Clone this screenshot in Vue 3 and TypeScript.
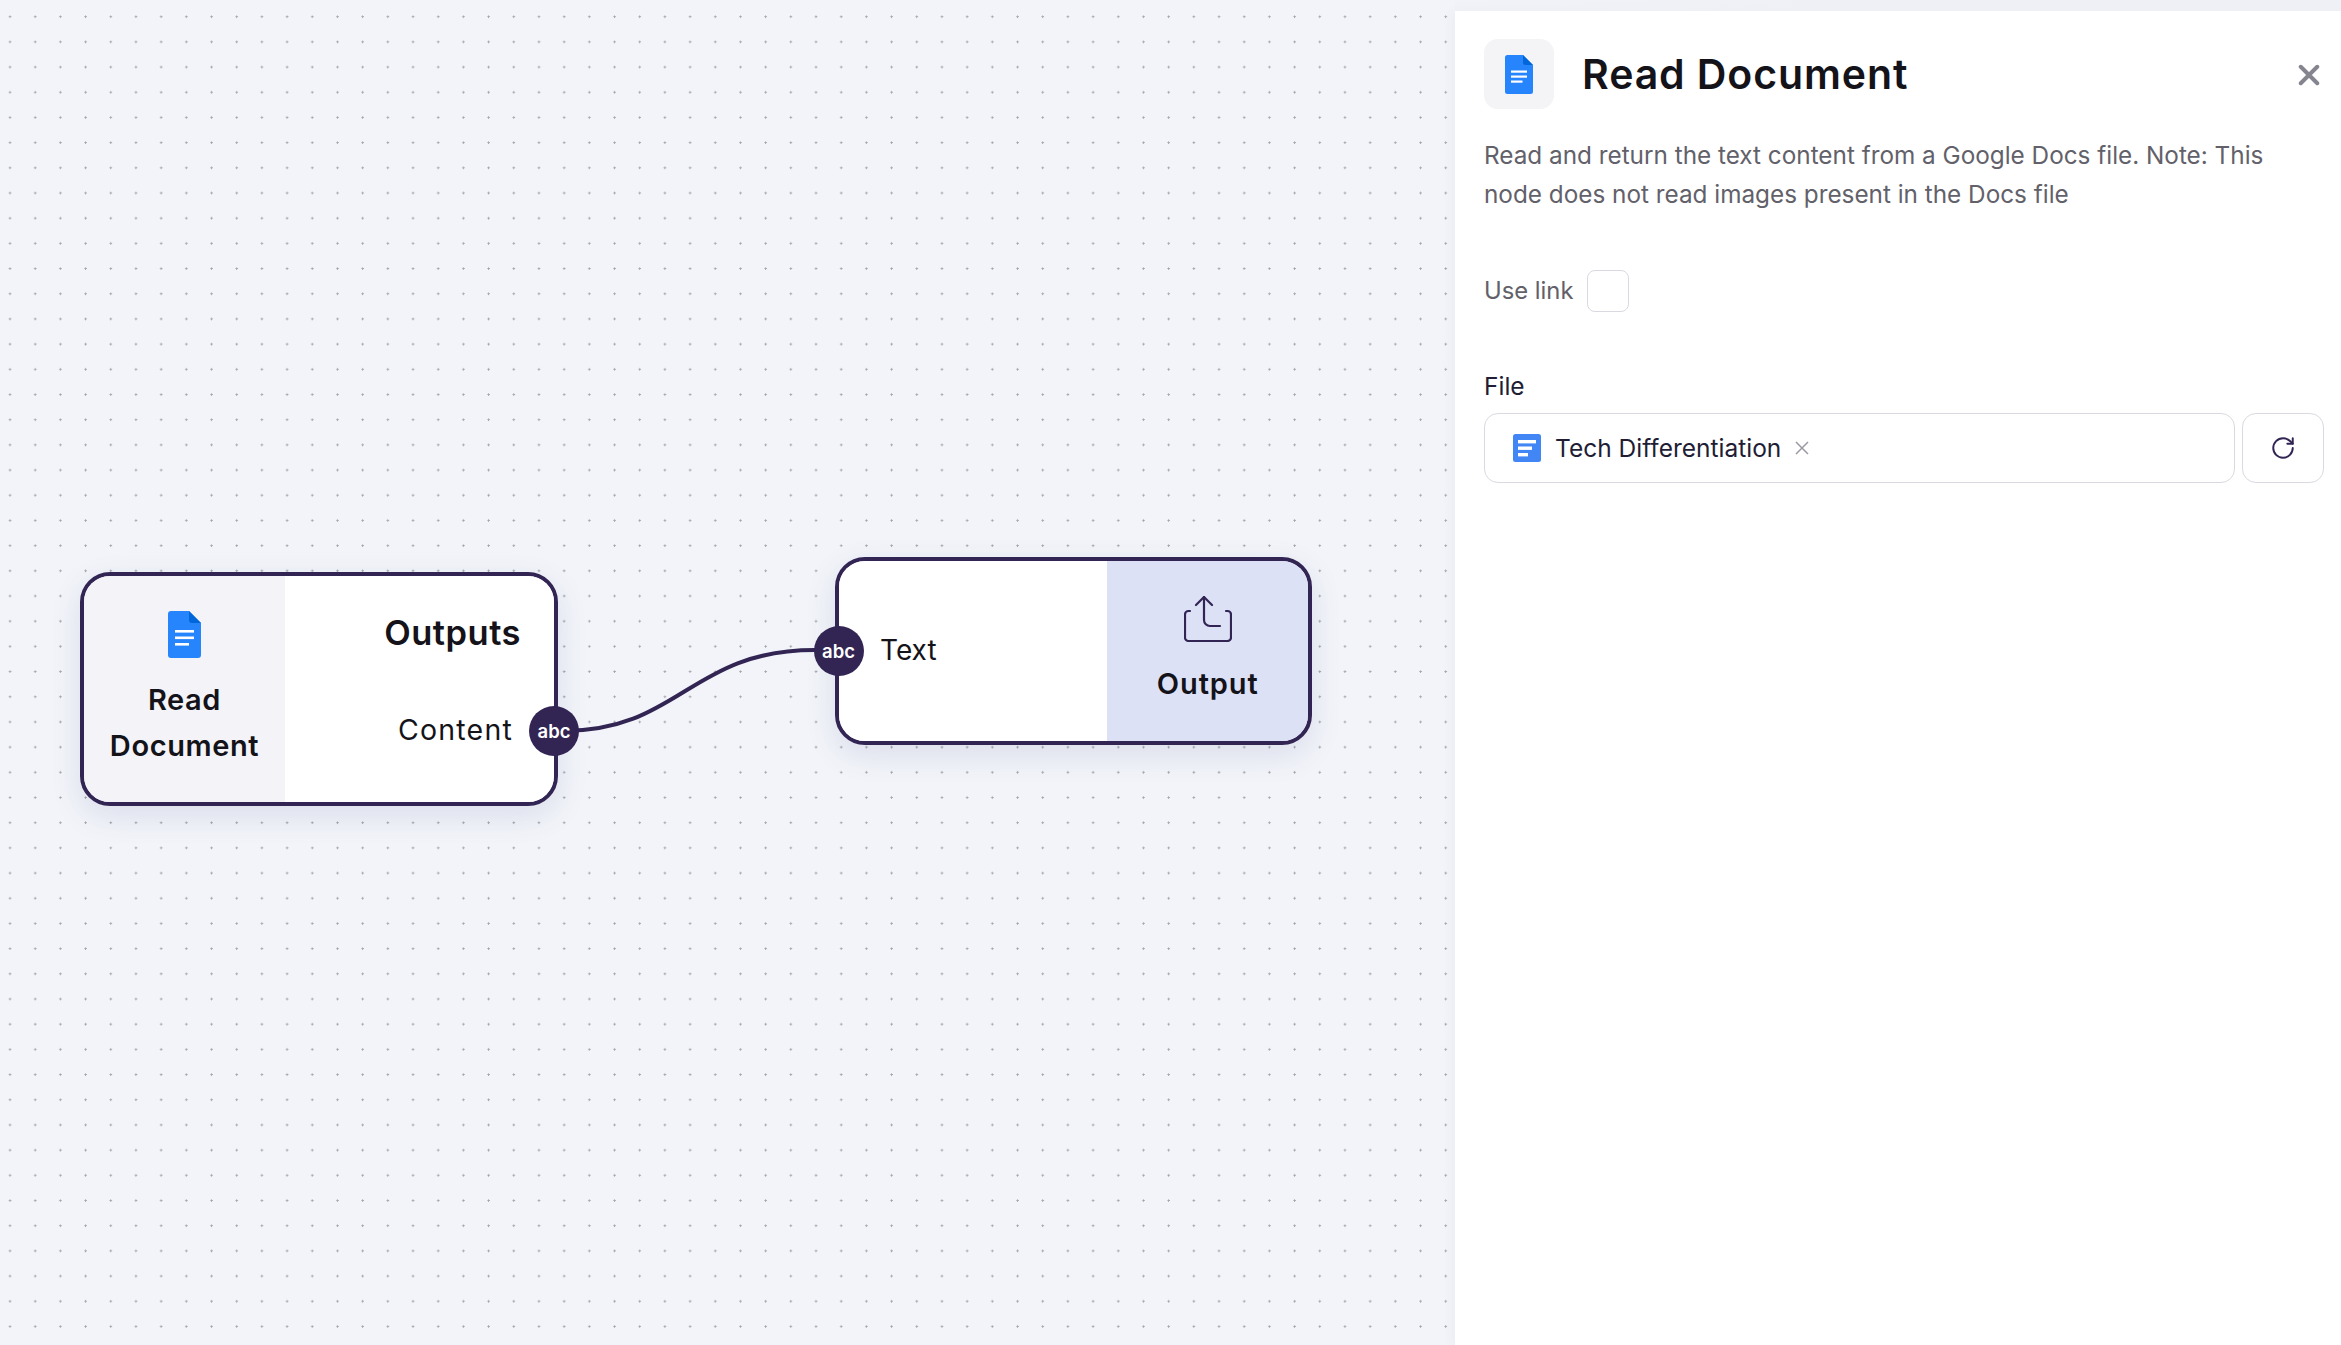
<script setup lang="ts">
const docBars: number[] = [19, 25.500]
const fileBars: { y: number; w: number }[] = [
  { y: 6, w: 18 },
  { y: 12.500, w: 14 },
  { y: 19, w: 10 },
]
</script>

<template>
  <div class="app">
    <main class="canvas">
      <svg class="edge" width="1455" height="1345" viewBox="0 0 1455 1345">
        <path d="M563 731 C 680 731, 690 650, 815 650" fill="none" stroke="#322554" stroke-width="4" />
      </svg>

      <section class="node node-read">
        <div class="node-side side-read">
          <svg class="doc-large" viewBox="0 0 33 47">
            <path d="M3 0H21L33 12V44a3 3 0 0 1-3 3H3a3 3 0 0 1-3-3V3a3 3 0 0 1 3-3Z" fill="#2684fc" />
            <path d="M21 0L33 12H24a3 3 0 0 1-3-3Z" fill="#0066da" />
            <rect v-for="y in docBars" :key="y" x="7" :y="y" width="19" height="2.600" fill="#fff" />
            <rect x="7" y="32" width="14" height="2.600" fill="#fff" />
          </svg>
          <div class="side-title">Read<br />Document</div>
        </div>
        <div class="node-body body-read">
          <div class="outputs">Outputs</div>
          <div class="port-label">Content</div>
        </div>
        <span class="handle handle-out">abc</span>
      </section>

      <section class="node node-output">
        <div class="node-body body-output">
          <div class="port-label">Text</div>
        </div>
        <div class="node-side side-output">
          <svg class="upload" viewBox="0 0 48 46" fill="none" stroke="#322554" stroke-width="2.200" stroke-linecap="round" stroke-linejoin="round">
            <path d="M6 15H4.500a3.500 3.500 0 0 0-3.500 3.500V41.500a3.500 3.500 0 0 0 3.500 3.500H43.500a3.500 3.500 0 0 0 3.500-3.500V18.500a3.500 3.500 0 0 0-3.500-3.500H42" />
            <path d="M20 1V24a6 6 0 0 0 6 6H36" />
            <path d="M12 9L20 1L28 9" />
          </svg>
          <div class="side-title side-title-output">Output</div>
        </div>
        <span class="handle handle-in">abc</span>
      </section>
    </main>

    <aside class="panel">
      <header class="panel-head">
        <div class="head-icon">
          <svg class="doc-small" viewBox="0 0 28 39">
            <path d="M2.500 0H18L28 10V36.500a2.500 2.500 0 0 1-2.500 2.500H2.500A2.500 2.500 0 0 1 0 36.500V2.500A2.500 2.500 0 0 1 2.500 0Z" fill="#2684fc" />
            <path d="M18 0L28 10H20.500a2.500 2.500 0 0 1-2.500-2.500Z" fill="#0066da" />
            <rect x="6" y="15.500" width="16" height="2.200" fill="#fff" />
            <rect x="6" y="20.500" width="16" height="2.200" fill="#fff" />
            <rect x="6" y="25.500" width="11.500" height="2.200" fill="#fff" />
          </svg>
        </div>
        <h1 class="panel-title">Read Document</h1>
        <svg class="close" viewBox="0 0 20 20" stroke="#85858f" stroke-width="3.600" stroke-linecap="round">
          <path d="M2.500 2.500L17.500 17.500M17.500 2.500L2.500 17.500" />
        </svg>
      </header>

      <p class="desc">Read and return the text content from a Google Docs file. Note: This node does not read images present in the Docs file</p>

      <div class="use-link">
        <span>Use link</span>
        <span class="checkbox"></span>
      </div>

      <div class="file-label">File</div>
      <div class="file-row">
        <div class="file-input">
          <svg class="file-icon" viewBox="0 0 28 28">
            <rect width="28" height="28" rx="2.500" fill="#4285f4" />
            <rect v-for="bar in fileBars" :key="bar.y" x="5" :y="bar.y" :width="bar.w" height="3.400" fill="#fff" />
          </svg>
          <span class="file-name">Tech Differentiation</span>
          <svg class="file-x" viewBox="0 0 14 14" stroke="#9a9aa3" stroke-width="1.500">
            <path d="M1 1L13 13M13 1L1 13" />
          </svg>
        </div>
        <button class="refresh" type="button" aria-label="Refresh">
          <svg viewBox="0 0 24 24" fill="none" stroke="#322554" stroke-width="1.800" stroke-linecap="round" stroke-linejoin="round">
            <path d="M21 12a9 9 0 1 1-9-9c2.520 0 4.930 1 6.740 2.740L21 8" />
            <path d="M21 3v5h-5" />
          </svg>
        </button>
      </div>
    </aside>
  </div>
</template>

<style>
html, body { margin: 0; padding: 0; background: #f2f4f9; }
</style>

<style scoped>
.app {
  display: flex;
  width: 2341px;
  height: 1345px;
  overflow: hidden;
  font-family: Inter, "Liberation Sans", sans-serif;
  color: #14131a;
}
.canvas {
  position: relative;
  flex: 0 0 1455px;
  height: 100%;
  background-color: #f2f4f9;
  background-image: radial-gradient(circle at 1.500px 1.500px, #a2a2a8 0.900px, transparent 1.200px);
  background-size: 25.200px 25.200px;
  background-position: 8.500px 15.200px;
}
.edge { position: absolute; left: 0; top: 0; }

.node {
  position: absolute;
  display: flex;
  box-sizing: border-box;
  border: 4px solid #322554;
  border-radius: 30px;
  box-shadow: 0 10px 30px rgba(70, 80, 150, 0.13);
}
.node-read { left: 80px; top: 572px; width: 478px; height: 234px; }
.node-output { left: 835px; top: 557px; width: 477px; height: 188px; }

.node-side {
  display: flex;
  flex-direction: column;
  align-items: center;
  box-sizing: border-box;
}
.side-read {
  width: 201px;
  padding-top: 35px;
  background: #f4f4f8;
  border-radius: 26px 0 0 26px;
}
.side-output {
  flex: 1;
  padding: 35px 0 0 1px;
  background: #dde1f6;
  border-radius: 0 26px 26px 0;
}
.doc-large { width: 33px; height: 47px; margin: 0 1px 18.500px 0; }
.upload { width: 48px; height: 46px; margin-bottom: 19px; }
.side-title {
  font-size: 29px;
  font-weight: 600;
  letter-spacing: 0.600px;
  line-height: 46px;
  text-align: center;
}
.side-title-output { letter-spacing: 0.900px; }
.node-body {
  background: #fff;
  box-sizing: border-box;
  display: flex;
  flex-direction: column;
}
.body-read {
  flex: 1;
  align-items: flex-end;
  padding: 36px 33px 0 0;
  border-radius: 0 26px 26px 0;
}
.body-output {
  width: 267.500px;
  justify-content: center;
  padding: 0 0 0 41px;
  border-radius: 26px 0 0 26px;
}
.outputs {
  font-size: 34.500px;
  font-weight: 600;
  letter-spacing: 0.500px;
  line-height: 42px;
  margin-bottom: 56px;
}
.port-label { font-size: 28px; line-height: 40px; }
.body-read .port-label { margin-right: 8px; font-size: 28.500px; letter-spacing: 1.200px; }
.body-output .port-label { margin-top: -2px; }

.handle {
  position: absolute;
  width: 50px;
  height: 50px;
  border-radius: 50%;
  background: #322554;
  color: #fff;
  font-size: 18.500px;
  font-weight: 600;
  display: flex;
  align-items: center;
  justify-content: center;
}
.handle-out { right: -25px; top: 130px; }
.handle-in { left: -25.500px; top: 65px; }

.panel {
  position: relative;
  flex: 0 0 886px;
  margin-top: 11px;
  box-sizing: border-box;
  padding: 28px 17px 0 29px;
  background: #fff;
  box-shadow: -4px 0 10px rgba(70, 80, 150, 0.04);
}
.panel::before {
  content: "";
  position: absolute;
  left: 0;
  right: 0;
  top: -11px;
  height: 11px;
  background:
    linear-gradient(90deg, rgba(239, 240, 245, 0.4), #eff0f5 45%);
}
.panel-head {
  display: flex;
  align-items: center;
  height: 70px;
}
.head-icon {
  width: 70px;
  height: 70px;
  border-radius: 14px;
  background: #f4f4f7;
  display: flex;
  align-items: center;
  justify-content: center;
  flex: none;
}
.doc-small { width: 28px; height: 39px; }
.panel-title {
  flex: 1;
  margin: 0 0 0 28px;
  font-size: 41px;
  font-weight: 600;
  letter-spacing: 0.900px;
  line-height: 50px;
}
.close { width: 22px; height: 22px; margin: 2px 4px 0 0; flex: none; }
.desc {
  margin: 27px 0 0;
  width: 800px;
  font-size: 24.300px;
  line-height: 39px;
  color: #62616a;
}
.use-link {
  display: flex;
  align-items: center;
  gap: 14px;
  margin-top: 55.500px;
  font-size: 23.800px;
  color: #62616a;
}
.checkbox {
  width: 42px;
  height: 42px;
  box-sizing: border-box;
  border: 1.500px solid #d9d9e1;
  border-radius: 8px;
  background: #fff;
}
.file-label {
  margin-top: 57px;
  font-size: 24.500px;
  line-height: 34px;
  color: #211d35;
}
.file-row {
  display: flex;
  gap: 7px;
  margin-top: 10px;
  height: 70px;
}
.file-input {
  flex: 1;
  display: flex;
  align-items: center;
  box-sizing: border-box;
  padding-left: 28px;
  border: 1.500px solid #d9d9e1;
  border-radius: 14px;
}
.file-icon { width: 28px; height: 28px; flex: none; }
.file-name {
  margin-left: 14px;
  font-size: 24.500px;
  color: #211d35;
}
.file-x { width: 14px; height: 14px; margin-left: 14px; }
.refresh {
  width: 82px;
  box-sizing: border-box;
  padding: 0;
  border: 1.500px solid #d9d9e1;
  border-radius: 14px;
  background: #fff;
  display: flex;
  align-items: center;
  justify-content: center;
}
.refresh svg { width: 26px; height: 26px; }
</style>
